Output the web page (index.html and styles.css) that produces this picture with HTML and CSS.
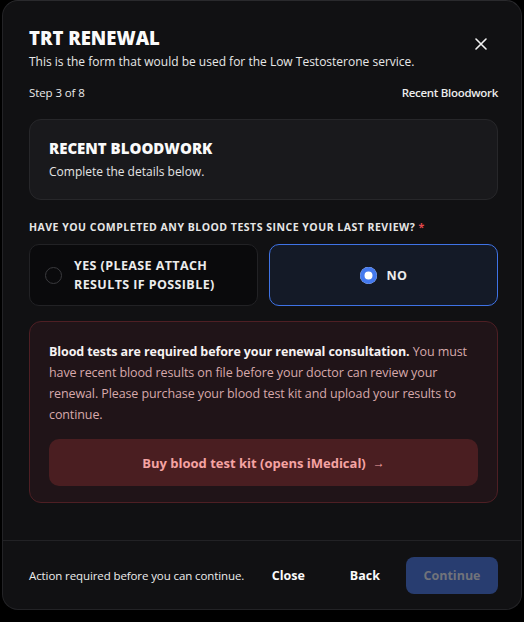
FILE: index.html
```html
<!DOCTYPE html>
<html>
<head>
<meta charset="utf-8">
<link rel="stylesheet" href="styles.css">
</head>
<body>
<div class="modal">
  <div class="content">
    <div class="header">
      <div>
        <h1 class="title">TRT RENEWAL</h1>
        <p class="subtitle">This is the form that would be used for the Low Testosterone service.</p>
      </div>
      <button class="close" aria-label="Close">
        <svg width="12" height="12" viewBox="0 0 12 12"><path d="M1 1L11 11M11 1L1 11" stroke="#f2f2f2" stroke-width="1.6" stroke-linecap="round"/></svg>
      </button>
    </div>
    <div class="steps">
      <span>Step 3 of 8</span>
      <span class="step-name">Recent Bloodwork</span>
    </div>
    <div class="card">
      <h2 class="card-title">RECENT BLOODWORK</h2>
      <p class="card-sub">Complete the details below.</p>
    </div>
    <div class="question">HAVE YOU COMPLETED ANY BLOOD TESTS SINCE YOUR LAST REVIEW? <span class="req">*</span></div>
    <div class="options">
      <div class="option">
        <span class="radio"></span>
        <span class="opt-label">YES (PLEASE ATTACH RESULTS IF POSSIBLE)</span>
      </div>
      <div class="option selected">
        <span class="radio on"></span>
        <span class="opt-label">NO</span>
      </div>
    </div>
    <div class="alert">
      <p class="alert-text"><strong>Blood tests are required before your renewal consultation.</strong> You must have recent blood results on file before your doctor can review your renewal. Please purchase your blood test kit and upload your results to continue.</p>
      <button class="buy">Buy blood test kit (opens iMedical) <span class="arrow">→</span></button>
    </div>
  </div>
  <div class="footer">
    <span class="footer-note">Action required before you can continue.</span>
    <div class="actions">
      <button class="btn-text">Close</button>
      <button class="btn-text">Back</button>
      <button class="btn-primary" disabled>Continue</button>
    </div>
  </div>
</div>
</body>
</html>
```
FILE: styles.css
```css
* { box-sizing: border-box; }
html, body { margin: 0; padding: 0; background: #000; }
body {
  font-family: "Open Sans", "Noto Sans", sans-serif;
  color: #f2f2f2;
  width: 524px;
  height: 622px;
  overflow: hidden;
}
button { font-family: inherit; cursor: pointer; }
.modal {
  margin: 0 2px;
  width: 520px;
  height: 610px;
  background: #111113;
  border: 1px solid #232326;
  border-top-color: #2a2a2d;
  border-radius: 16px;
  display: flex;
  flex-direction: column;
}
.content {
  padding: 26px 23px 0 26px;
  flex: 1;
}
.header {
  display: flex;
  justify-content: space-between;
  align-items: flex-start;
}
.title {
  margin: 0;
  font-size: 18.5px;
  line-height: 22px;
  font-weight: 800;
  letter-spacing: 0;
  color: #fafafa;
}
.subtitle {
  margin: 5px 0 0;
  font-size: 12px;
  line-height: 16px;
  color: #e8e8e8;
}
.close {
  background: none;
  border: 0;
  padding: 0;
  margin: 11px 11px 0 0;
  width: 12px;
  height: 12px;
  display: flex;
}
.steps {
  display: flex;
  justify-content: space-between;
  margin-top: 16px;
  font-size: 11.5px;
  line-height: 14px;
  color: #ececec;
  letter-spacing: -0.1px;
}
.step-name { font-weight: 600; letter-spacing: -0.3px; }
.card {
  margin-top: 19px;
  background: #19191c;
  border: 1px solid #27272a;
  border-radius: 12px;
  padding: 18px 19px 19px;
}
.card-title {
  margin: 0;
  font-size: 15px;
  line-height: 20px;
  font-weight: 800;
  color: #fafafa;
}
.card-sub {
  margin: 6px 0 0;
  font-size: 12px;
  line-height: 16px;
  color: #e4e4e4;
}
.question {
  margin-top: 20px;
  font-size: 10.5px;
  line-height: 14px;
  font-weight: 700;
  letter-spacing: 0.5px;
  color: #e6e6e6;
}
.req { color: #e5484d; }
.options {
  margin-top: 10px;
  display: grid;
  grid-template-columns: 1fr 1fr;
  gap: 11px;
}
.option {
  height: 62px;
  border-radius: 10px;
  border: 1px solid #222225;
  background: #0a0a0c;
  display: flex;
  align-items: center;
  padding: 0 15px;
  gap: 12px;
}
.option.selected {
  background: #141a27;
  border-color: #3f73e6;
  justify-content: center;
  gap: 10px;
}
.radio {
  width: 17px;
  height: 17px;
  border-radius: 50%;
  border: 1px solid #3a3a3e;
  flex-shrink: 0;
}
.radio.on {
  border: 0;
  background: #fff;
  box-shadow: inset 0 0 0 4.5px #4479ee;
}
.opt-label {
  font-size: 12.5px;
  line-height: 19px;
  font-weight: 700;
  color: #ececec;
  letter-spacing: 0.4px;
}
.alert {
  margin-top: 15px;
  background: #201418;
  border: 1px solid #4e1f24;
  border-radius: 12px;
  padding: 19px 19px 16px;
}
.alert-text {
  margin: 0;
  font-size: 12.5px;
  line-height: 21px;
  color: #d7a9ab;
  letter-spacing: -0.1px;
}
.alert-text strong { color: #f7f2f2; font-weight: 700; }
.buy {
  margin-top: 14px;
  width: 100%;
  height: 47px;
  border: 0;
  border-radius: 10px;
  background: #4a1e21;
  color: #f5a3a3;
  font-size: 13px;
  font-weight: 700;
  display: flex;
  align-items: center;
  justify-content: center;
  gap: 7px;
}
.arrow { font-weight: 400; font-size: 12px; }
.footer {
  border-top: 1px solid #222225;
  height: 69px;
  display: flex;
  align-items: center;
  justify-content: space-between;
  padding: 0 23px 0 26px;
}
.footer-note {
  font-size: 11.5px;
  color: #ececec;
  letter-spacing: -0.1px;
}
.actions {
  display: flex;
  align-items: center;
}
.btn-text {
  background: none;
  border: 0;
  color: #fafafa;
  font-size: 12.5px;
  font-weight: 700;
  padding: 0;
  margin-right: 45px;
}
.btn-text + .btn-text { margin-right: 26px; }
.btn-primary {
  width: 92px;
  height: 37px;
  border: 0;
  border-radius: 8px;
  background: #283d70;
  color: #71737a;
  font-size: 12.5px;
  font-weight: 700;
  cursor: default;
}
```
